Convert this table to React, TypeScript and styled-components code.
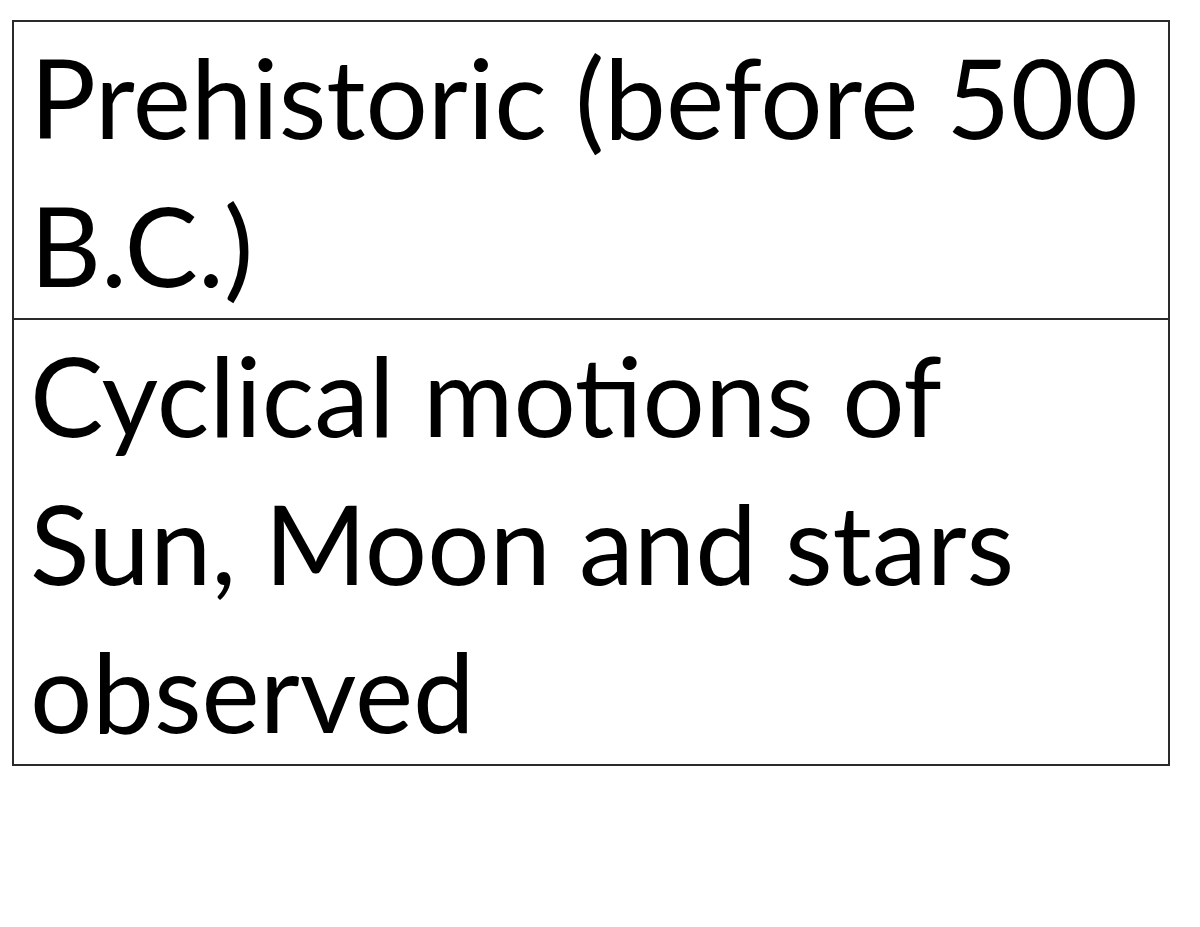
import React from 'react';
import styled, { createGlobalStyle } from 'styled-components';

const GlobalStyle = createGlobalStyle`
  html, body {
    margin: 0;
    padding: 0;
    background: #fff;
  }
`;

const rows = [
  'Prehistoric (before 500 B.C.)',
  'Cyclical motions of Sun, Moon and stars observed',
];

const App: React.FC = () => {
  return (
    <>
      <GlobalStyle />
      <Page>
        <Table>
          <tbody>
            {rows.map((text) => (
              <Row key={text}>
                <Cell>{text}</Cell>
              </Row>
            ))}
          </tbody>
        </Table>
      </Page>
    </>
  );
};

export default App;

const Page = styled.div`
  padding: 20px 0 0 12px;
  font-family: Lato, 'Open Sans', sans-serif;
`;

const Table = styled.table`
  width: 1158px;
  border-collapse: collapse;
`;

const Row = styled.tr``;

const Cell = styled.td`
  border: 2px solid #2a2a2a;
  padding: 0 10px 0 16px;
  font-size: 110px;
  line-height: 148px;
  color: #000;
  text-align: left;
  vertical-align: top;
`;
